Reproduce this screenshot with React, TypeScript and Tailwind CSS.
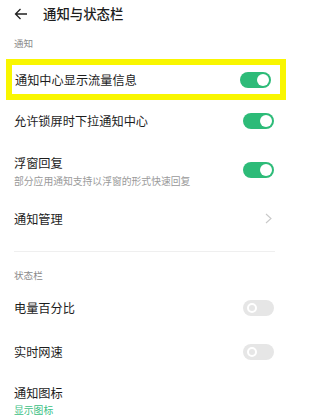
import React from "react";

const font = { fontFamily: '"Noto Sans CJK SC", "Noto Sans", sans-serif' };

function Toggle({ on }: { on: boolean }) {
  if (on) {
    return (
      <div className="w-[31px] h-[16px] rounded-full bg-[#2dbb78] flex items-center justify-end px-[2px] shrink-0">
        <div className="w-[12px] h-[12px] rounded-full bg-white" />
      </div>
    );
  }
  return (
    <div className="w-[31px] h-[16px] rounded-full bg-[#e6e6e6] flex items-center px-[4px] shrink-0">
      <div className="w-[10px] h-[10px] rounded-full border-2 border-white" />
    </div>
  );
}

function Chevron() {
  return (
    <svg width="7" height="11" viewBox="0 0 7 11" className="shrink-0 mr-[2px]">
      <path d="M1 1 L6 5.5 L1 10" fill="none" stroke="#c9c9c9" strokeWidth="1.1" />
    </svg>
  );
}

export default function App() {
  return (
    <div className="w-[292px] h-[420px] bg-white overflow-hidden text-[#1d1d1d]" style={font}>
      {/* header */}
      <div className="h-[28px] flex items-center pl-[14px]">
        <svg width="14" height="12" viewBox="0 0 14 12" className="shrink-0">
          <path d="M13 6 H1.5 M6.5 1 L1.5 6 L6.5 11" fill="none" stroke="#222" strokeWidth="1.3" />
        </svg>
        <span className="ml-[15px] text-[13.4px] font-medium leading-none">通知与状态栏</span>
      </div>

      <div className="pl-[14px] pt-[9px] h-[31px] text-[9.6px] leading-[12px] text-[#8a8a8a]">通知</div>

      {/* highlighted row */}
      <div className="mx-[6px] h-[41px] border-[6px] border-[#f9f600] flex items-center justify-between pl-[3px] pr-[9px]">
        <span className="text-[12.2px] leading-[18px]">通知中心显示流量信息</span>
        <Toggle on />
      </div>

      <div className="h-[42px] flex items-center justify-between px-[14px] pr-[18px]">
        <span className="text-[12.2px] leading-[18px]">允许锁屏时下拉通知中心</span>
        <Toggle on />
      </div>

      <div className="h-[55px] flex items-center justify-between px-[14px] pr-[18px]">
        <div className="flex flex-col pt-[3px]">
          <span className="text-[12.2px] leading-[18px]">浮窗回复</span>
          <span className="mt-[3px] text-[9.8px] leading-[13px] text-[#9a9a9a]">部分应用通知支持以浮窗的形式快速回复</span>
        </div>
        <Toggle on />
      </div>

      <div className="h-[43px] flex items-center justify-between px-[14px] pr-[18px]">
        <span className="text-[12.2px] leading-[18px]">通知管理</span>
        <Chevron />
      </div>

      <div className="mt-[11px] ml-[14px] w-[261px] h-px bg-[#efefef]" />

      <div className="pl-[14px] pt-[17px] h-[34px] text-[9.6px] leading-[12px] text-[#8a8a8a]">状态栏</div>

      <div className="h-[44px] flex items-center justify-between px-[14px] pr-[18px]">
        <span className="text-[12.2px] leading-[18px]">电量百分比</span>
        <Toggle on={false} />
      </div>

      <div className="h-[44px] flex items-center justify-between px-[14px] pr-[18px]">
        <span className="text-[12.2px] leading-[18px]">实时网速</span>
        <Toggle on={false} />
      </div>

      <div className="pt-[10px] px-[14px] flex flex-col">
        <span className="text-[12.2px] leading-[18px]">通知图标</span>
        <span className="mt-[2px] text-[9.8px] leading-[13px] text-[#3cbf85]">显示图标</span>
      </div>
    </div>
  );
}
